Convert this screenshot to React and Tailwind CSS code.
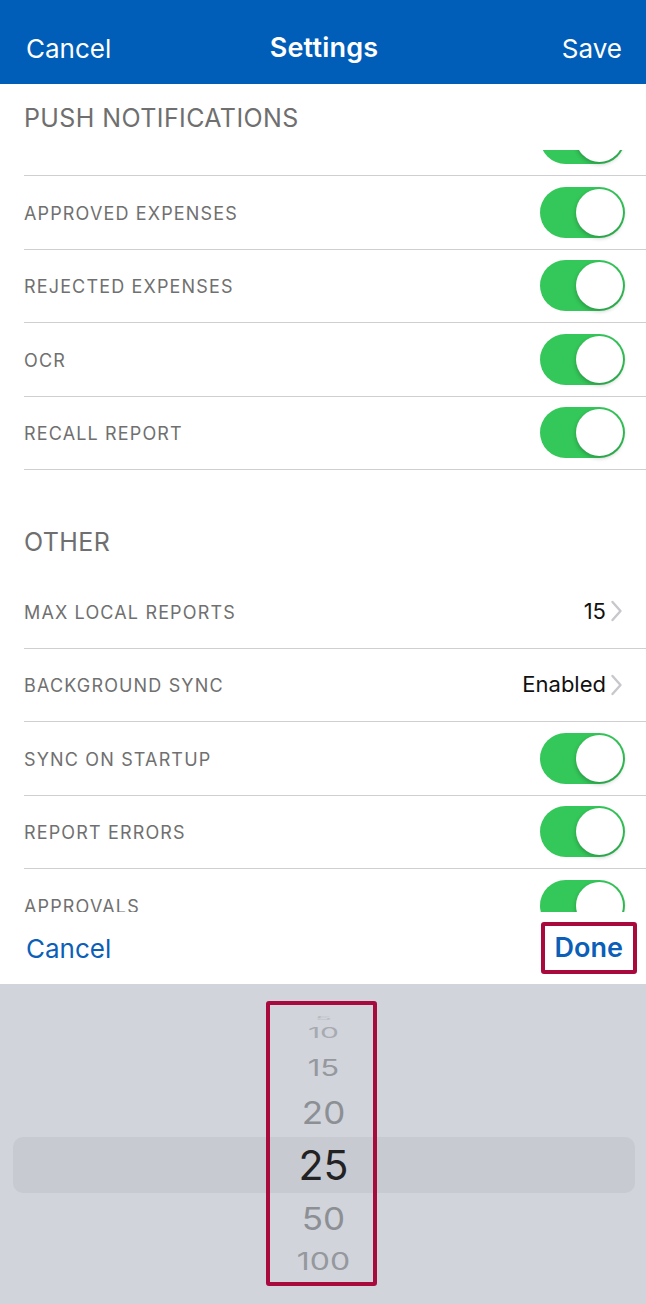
import React from "react";

const font = { fontFamily: "Inter, 'Noto Sans', sans-serif" };

function Toggle() {
  return (
    <div className="relative h-[51px] w-[85px] shrink-0 rounded-full bg-[#34c759]">
      <div className="absolute right-[2px] top-[2px] h-[47px] w-[47px] rounded-full bg-white shadow-[0_2px_4px_rgba(0,0,0,0.25)]" />
    </div>
  );
}

function Chevron() {
  return (
    <svg width="13" height="22" viewBox="0 0 13 22" className="ml-[4px]">
      <path d="M2.5 2 L10.5 11 L2.5 20" fill="none" stroke="#c7c7cc" strokeWidth="2.4" strokeLinecap="round" strokeLinejoin="round" />
    </svg>
  );
}

function Row({ label, value, toggle = true }) {
  return (
    <div className="ml-6 flex h-[73.5px] shrink-0 items-center justify-between border-b border-[#cfcfd2] pr-[21px]">
      <span className="pt-[2px] text-[18px] tracking-[1.15px] text-[#707070]">{label}</span>
      {toggle ? (
        <Toggle />
      ) : (
        <div className="flex items-center pr-[2px]">
          <span className="text-[22px] text-[#111]">{value}</span>
          <Chevron />
        </div>
      )}
    </div>
  );
}

export default function App() {
  return (
    <div className="flex h-[1304px] w-[646px] flex-col overflow-hidden bg-white" style={font}>
      <div className="grid h-[84px] shrink-0 grid-cols-[1fr_auto_1fr] items-center bg-[#005db8] pl-[26px] pr-[24px] pt-[12px] text-white">
        <span className="justify-self-start text-[26px]">Cancel</span>
        <span className="text-[27px] font-semibold tracking-[0.2px]">Settings</span>
        <span className="justify-self-end text-[26px]">Save</span>
      </div>

      <div className="flex h-[828px] shrink-0 flex-col overflow-hidden">
        <div className="flex h-[66px] shrink-0 items-center pl-6 pt-[4px]">
          <span className="text-[25px] tracking-[0.4px] text-[#6f6f6f]">PUSH NOTIFICATIONS</span>
        </div>
        <div className="flex h-[26px] shrink-0 flex-col justify-end overflow-hidden">
          <Row label="" />
        </div>
        <Row label="APPROVED EXPENSES" />
        <Row label="REJECTED EXPENSES" />
        <Row label="OCR" />
        <Row label="RECALL REPORT" />
        <div className="flex h-[105px] shrink-0 items-end pl-6 pb-[14px]">
          <span className="text-[25px] tracking-[0.4px] text-[#6f6f6f]">OTHER</span>
        </div>
        <Row label="MAX LOCAL REPORTS" value="15" toggle={false} />
        <Row label="BACKGROUND SYNC" value="Enabled" toggle={false} />
        <Row label="SYNC ON STARTUP" />
        <Row label="REPORT ERRORS" />
        <Row label="APPROVALS" />
      </div>

      <div className="flex h-[72px] shrink-0 items-center justify-between bg-white pl-[26px] pr-[9px]">
        <span className="text-[26px] text-[#0b5fb8]">Cancel</span>
        <span className="flex h-[52px] items-center rounded-[3px] border-4 border-[#a80a3e] px-[10px] text-[27px] font-semibold text-[#0b5fb8]">
          Done
        </span>
      </div>

      <div className="relative flex flex-1 justify-center bg-[#d1d4db] pt-[17px]">
        <div className="absolute left-[13px] right-[11px] top-[153px] h-[56px] rounded-[10px] bg-[#c7cad1]" />
        <div className="relative ml-[-3px] flex h-[285px] w-[111px] flex-col items-center overflow-hidden rounded-[3px] border-4 border-[#a80a3e] pl-[4px] leading-none">
          <div className="h-[6px] shrink-0" />
          <div className="flex h-[14px] shrink-0 items-center justify-center overflow-hidden">
            <span className="scale-y-[0.15] text-[28px] text-[#b8bbc0]">5</span>
          </div>
          <div className="flex h-[14px] shrink-0 items-center justify-center">
            <span className="scale-y-[0.5] text-[30px] text-[#a7aaaf]">10</span>
          </div>
          <div className="flex h-[56px] shrink-0 items-center justify-center">
            <span className="scale-y-[0.72] text-[31px] text-[#95989d]">15</span>
          </div>
          <div className="flex h-[34px] shrink-0 items-center justify-center">
            <span className="scale-y-[0.9] text-[35px] text-[#8c8f94]">20</span>
          </div>
          <div className="flex h-[72px] shrink-0 items-center justify-center">
            <span className="text-[41px] text-[#222224]">25</span>
          </div>
          <div className="flex h-[34px] shrink-0 items-center justify-center">
            <span className="scale-y-[0.9] text-[35px] text-[#8c8f94]">50</span>
          </div>
          <div className="flex h-[54px] shrink-0 items-center justify-center">
            <span className="scale-y-[0.75] text-[32px] text-[#95989d]">100</span>
          </div>
        </div>
      </div>
    </div>
  );
}
